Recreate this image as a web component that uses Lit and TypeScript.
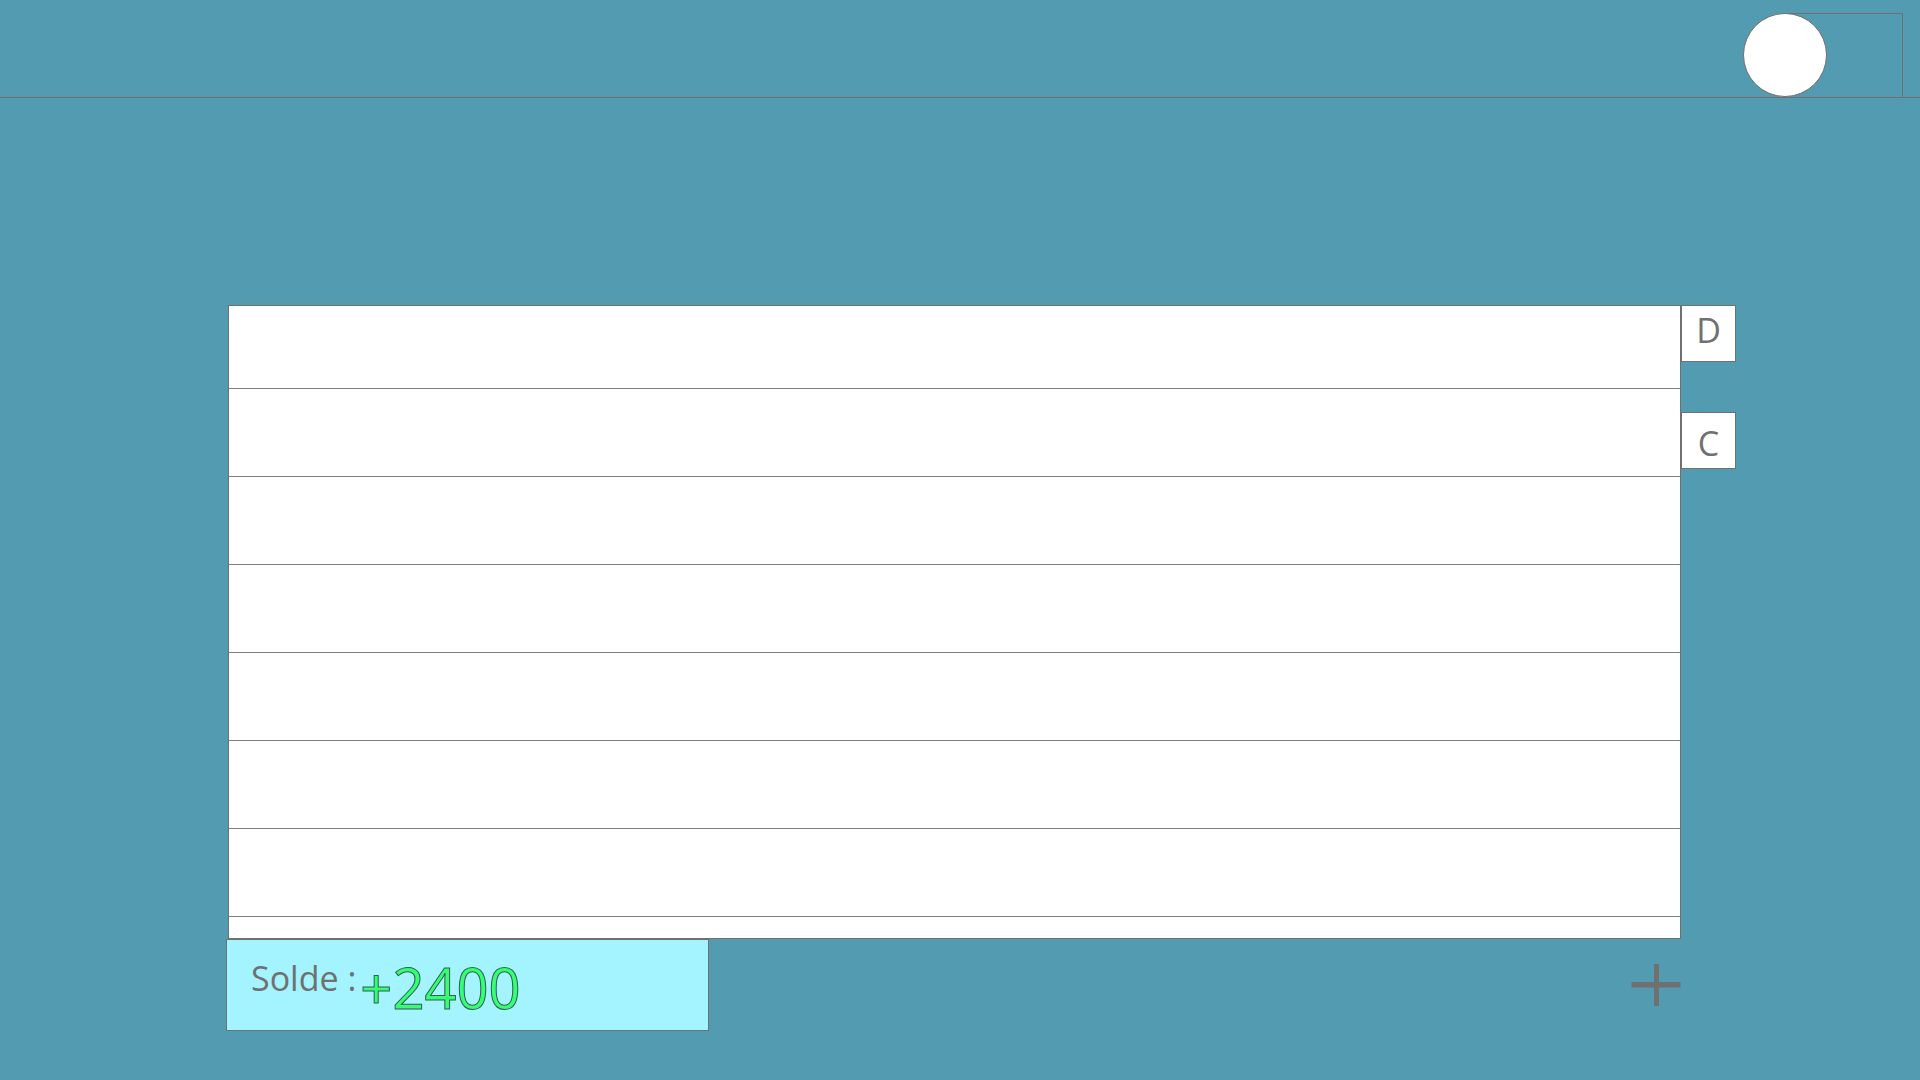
import { LitElement, html, css } from "lit";
import { customElement, property, state } from "lit/decorators.js";

@customElement("app-header")
class AppHeader extends LitElement {
  static styles = css`
    :host {
      display: block;
    }
    .bar {
      box-sizing: border-box;
      height: 98px;
      display: flex;
      justify-content: flex-end;
      align-items: flex-end;
      padding-right: 17px;
      border-bottom: 1px solid #707070;
    }
    .account {
      display: flex;
    }
    .avatar {
      width: 84px;
      height: 84px;
      padding: 0;
      border: 1px solid #707070;
      border-radius: 50%;
      background: #fff;
      z-index: 1;
    }
    .panel {
      box-sizing: border-box;
      width: 118px;
      height: 84px;
      margin-left: -42px;
      border: 1px solid #707070;
      border-width: 1px 1px 0 0;
    }
  `;

  render() {
    return html`
      <header class="bar">
        <div class="account">
          <button class="avatar" aria-label="Compte"></button>
          <div class="panel"></div>
        </div>
      </header>
    `;
  }
}

@customElement("account-balance")
class AccountBalance extends LitElement {
  @property({ type: Number }) amount = 0;

  static styles = css`
    :host {
      display: block;
    }
    .box {
      box-sizing: border-box;
      height: 92px;
      display: flex;
      align-items: flex-start;
      gap: 4px;
      padding: 15px 24px 0;
      background: #a3f4ff;
      border: 1px solid #707070;
      color: #707070;
    }
    .label {
      font-size: 34px;
      line-height: 46px;
    }
    .amount {
      font-family: "Noto Sans", "Open Sans", sans-serif;
      font-size: 56px;
      line-height: 64px;
      color: #33ff70;
      -webkit-text-stroke: 1px #2f5f55;
    }
  `;

  render() {
    const sign = this.amount >= 0 ? "+" : "";
    return html`
      <div class="box">
        <span class="label">Solde :</span>
        <span class="amount">${sign}${this.amount}</span>
      </div>
    `;
  }
}

@customElement("app-root")
export class AppRoot extends LitElement {
  @state() private entries: string[] = ["", "", "", "", "", "", "", ""];

  static styles = css`
    :host {
      display: block;
      min-height: 100vh;
      background: #539bb0;
      font-family: "Open Sans", "Noto Sans", sans-serif;
      color: #707070;
    }
    .content {
      display: grid;
      grid-template-columns: minmax(0, 1fr) 55px;
      padding: 207px 184px 48px 226px;
    }
    .sheet {
      list-style: none;
      margin: 0 0 0 2px;
      padding: 0;
      display: grid;
      grid-template-rows: 83px repeat(6, 88px) 21px;
      background: #fff;
      border: 1px solid #707070;
    }
    .entry {
      border-bottom: 1px solid #808080;
    }
    .entry:last-child {
      border-bottom: 0;
    }
    .tabs {
      display: flex;
      flex-direction: column;
      gap: 50px;
    }
    .tab {
      box-sizing: border-box;
      height: 57px;
      padding: 0;
      background: #fff;
      border: 1px solid #707070;
      color: inherit;
      font: inherit;
      font-size: 34px;
      line-height: 46px;
    }
    .credit {
      padding-top: 4px;
    }
    .debit {
      padding-bottom: 8px;
    }
    .footer {
      display: flex;
      justify-content: space-between;
      align-items: flex-start;
    }
    .balance {
      flex: 0 1 483px;
    }
    .add {
      margin-top: 25px;
      padding: 0;
      border: 0;
      background: none;
      color: inherit;
    }
    .plus {
      display: block;
      width: 50px;
      height: 42px;
    }
  `;

  private addEntry() {
    this.entries = [...this.entries, ""];
  }

  render() {
    return html`
      <app-header></app-header>
      <main class="content">
        <ul class="sheet">
          ${this.entries.map((entry) => html`<li class="entry">${entry}</li>`)}
        </ul>
        <nav class="tabs">
          <button class="tab debit">D</button>
          <button class="tab credit">C</button>
        </nav>
        <div class="footer">
          <account-balance class="balance" .amount=${2400}></account-balance>
          <button class="add" aria-label="Ajouter" @click=${this.addEntry}>
            <svg class="plus" viewBox="0 0 50 42" fill="currentColor">
              <rect x="0.5" y="18" width="49" height="5.5" />
              <rect x="23" y="0" width="5" height="42" />
            </svg>
          </button>
        </div>
      </main>
    `;
  }
}
